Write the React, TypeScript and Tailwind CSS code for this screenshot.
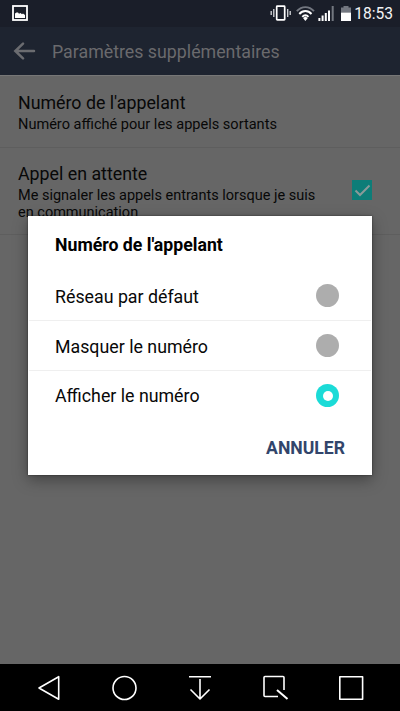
import React from 'react';
import clsx from 'clsx';

interface CallerOption {
  id: string;
  label: string;
}

const options: CallerOption[] = [
  { id: 'default', label: 'Réseau par défaut' },
  { id: 'hide', label: 'Masquer le numéro' },
  { id: 'show', label: 'Afficher le numéro' },
];

const StatusBar: React.FC = () => (
  <div className="h-[27px] shrink-0 flex items-center bg-[#1a1e29] pl-3 pr-[7px]">
    <svg className="w-4 h-4 mb-px" viewBox="0 0 16 16" fill="none">
      <rect x="1" y="1" width="14" height="14" stroke="#fff" strokeWidth="1.8" />
      <path d="M3 13V8.500L4.500 7.500H6L7 8.800l1.500-.8L10 9.200l1-.8L13 10V13z" fill="#fff" />
    </svg>
    <svg className="ml-auto mb-px w-[82px] h-[22px]" viewBox="0 0 82 22" fill="none">
      {/* Vibrate */}
      <rect x="6.7" y="4.2" width="8" height="13.6" rx=".6" stroke="#fff" strokeWidth="1.7" />
      <path d="M3.8 7v8M1.2 9v4M17.7 7v8M20.2 9v4" stroke="#d8d9dc" strokeWidth="1.3" />
      {/* Wi-Fi */}
      <path d="M26.8 9.2C31.800 3.700 39 3.700 44 9.200" stroke="#737780" strokeWidth="1.9" />
      <path d="M29.3 12C32.8 8 38 8 41.5 12M32.3 14.8c1.8-2 4.4-2 6.2 0" stroke="#fff" strokeWidth="1.9" />
      <path d="M33 16l2.4-1.4 2.4 1.4-2.4 3z" fill="#fff" />
      {/* Signal */}
      <path d="M49.4 16v3M52.6 13.5V19M55.8 11v8M59 8.500V19" stroke="#fff" strokeWidth="2" />
      <path d="M62.700 4v15" stroke="#737780" strokeWidth="2" />
      {/* Battery */}
      <path d="M73.500 4h5v1.500H81V10.500H71V5.500h2.500z" fill="#737780" />
      <path d="M71 10.500H81V19H71z" fill="#fff" />
    </svg>
    <span className="ml-[2px] pt-[3px] text-[15.6px] leading-none text-[#f4f4f5] whitespace-nowrap">18:53</span>
  </div>
);

const AppBar: React.FC = () => (
  <div className="h-12 shrink-0 flex items-center bg-[#1e2430] pl-[13px]">
    <svg className="w-[23px] h-[18px]" viewBox="0 0 23 18" fill="none" stroke="#6b6c70" strokeWidth="2.5" strokeLinecap="round">
      <path d="M21 9H3M10 1.600L2.300 9 10 16.400" />
    </svg>
    <h1 className="ml-4 pt-px text-[17.8px] leading-6 text-[#6a6a6d] whitespace-nowrap">Paramètres supplémentaires</h1>
  </div>
);

const Settings: React.FC = () => (
  <div className="flex-1 bg-[#666] border-t border-[#777]">
    <div className="h-[72px] pl-[18px] pt-[15px] border-b border-[#5e5e5e]">
      <h2 className="text-[17.8px] leading-6 text-[#080808] whitespace-nowrap">Numéro de l'appelant</h2>
      <p className="mt-px text-[14.55px] leading-[18px] text-[#080808] whitespace-nowrap">Numéro affiché pour les appels sortants</p>
    </div>
    <div className="h-[87px] flex pl-[18px] pt-[14px] border-b border-[#5e5e5e]">
      <div>
        <h2 className="text-[17.8px] leading-6 text-[#080808] whitespace-nowrap">Appel en attente</h2>
        <p className="mt-px text-[14.5px] leading-[17px] text-[#080808] whitespace-nowrap">
          Me signaler les appels entrants lorsque je suis
          <br />
          en communication
        </p>
      </div>
      <div className="ml-auto mr-7 mt-[18px] w-5 h-5 bg-[#0d7d78]">
        <svg className="w-5 h-5" viewBox="0 0 20 20" fill="none" stroke="#8a9a99" strokeWidth="2">
          <path d="M3.500 10.500l4.500 4.500L17.500 5.500" />
        </svg>
      </div>
    </div>
  </div>
);

const NavBar: React.FC = () => (
  <div className="h-[47px] shrink-0 bg-black">
    <svg className="w-full h-[47px]" viewBox="0 0 400 47" fill="none" stroke="#fff" strokeWidth="1.6" strokeLinejoin="round">
      <path d="M58.700 12.700v22.600L39 24z" />
      <circle cx="124.500" cy="24" r="11.500" />
      <path d="M189 12.800h22M200 15v19M190.500 25.500L200 35l9.500-9.500" />
      <path d="M284 26V13.500a1 1 0 0 0-1-1h-18a1 1 0 0 0-1 1V31.500a1 1 0 0 0 1 1h13" />
      <path d="M277 26l10.500 9" strokeWidth="2" />
      <rect x="339.800" y="12.800" width="22.800" height="22.400" />
    </svg>
  </div>
);

const CallerDialog: React.FC = () => {
  const [selected, setSelected] = React.useState('show');

  return (
    <div className="absolute left-7 top-[216px] w-[344px] h-[259px] flex flex-col bg-white px-px shadow-[0_5px_14px_rgba(0,0,0,0.35),0_0_2px_rgba(0,0,0,0.5)]">
      <h2 className="h-[55px] shrink-0 flex items-center pl-[26px] pt-[3px] text-[17.7px] font-bold text-black whitespace-nowrap">
        Numéro de l'appelant
      </h2>
      {options.map((option, index) => (
        <button
          key={option.id}
          type="button"
          onClick={() => setSelected(option.id)}
          className={clsx(
            'shrink-0 flex items-center justify-between pl-[26px] pr-8 text-[17.8px] text-[#080808] whitespace-nowrap',
            index === 0 ? 'h-[49px]' : 'h-[50px] border-t border-[#efefef]'
          )}
        >
          <span className={index === 2 ? 'pt-px' : 'pt-[3px]'}>{option.label}</span>
          <span
            className={clsx(
              'w-[23px] h-[23px] rounded-full flex items-center justify-center',
              selected === option.id ? 'bg-[#1bdbd7]' : 'bg-[#adadad]'
            )}
          >
            {selected === option.id && <span className="w-[10px] h-[10px] rounded-full bg-white" />}
          </span>
        </button>
      ))}
      <div className="flex-1 flex items-center justify-end pr-[26px] pt-[2px]">
        <button type="button" className="text-[17.6px] font-bold text-[#32456b] whitespace-nowrap">ANNULER</button>
      </div>
    </div>
  );
};

export default function App() {
  return (
    <div className="relative w-[400px] h-[711px] flex flex-col overflow-hidden font-['Roboto',sans-serif]">
      <StatusBar />
      <AppBar />
      <Settings />
      <NavBar />
      <CallerDialog />
    </div>
  );
}
